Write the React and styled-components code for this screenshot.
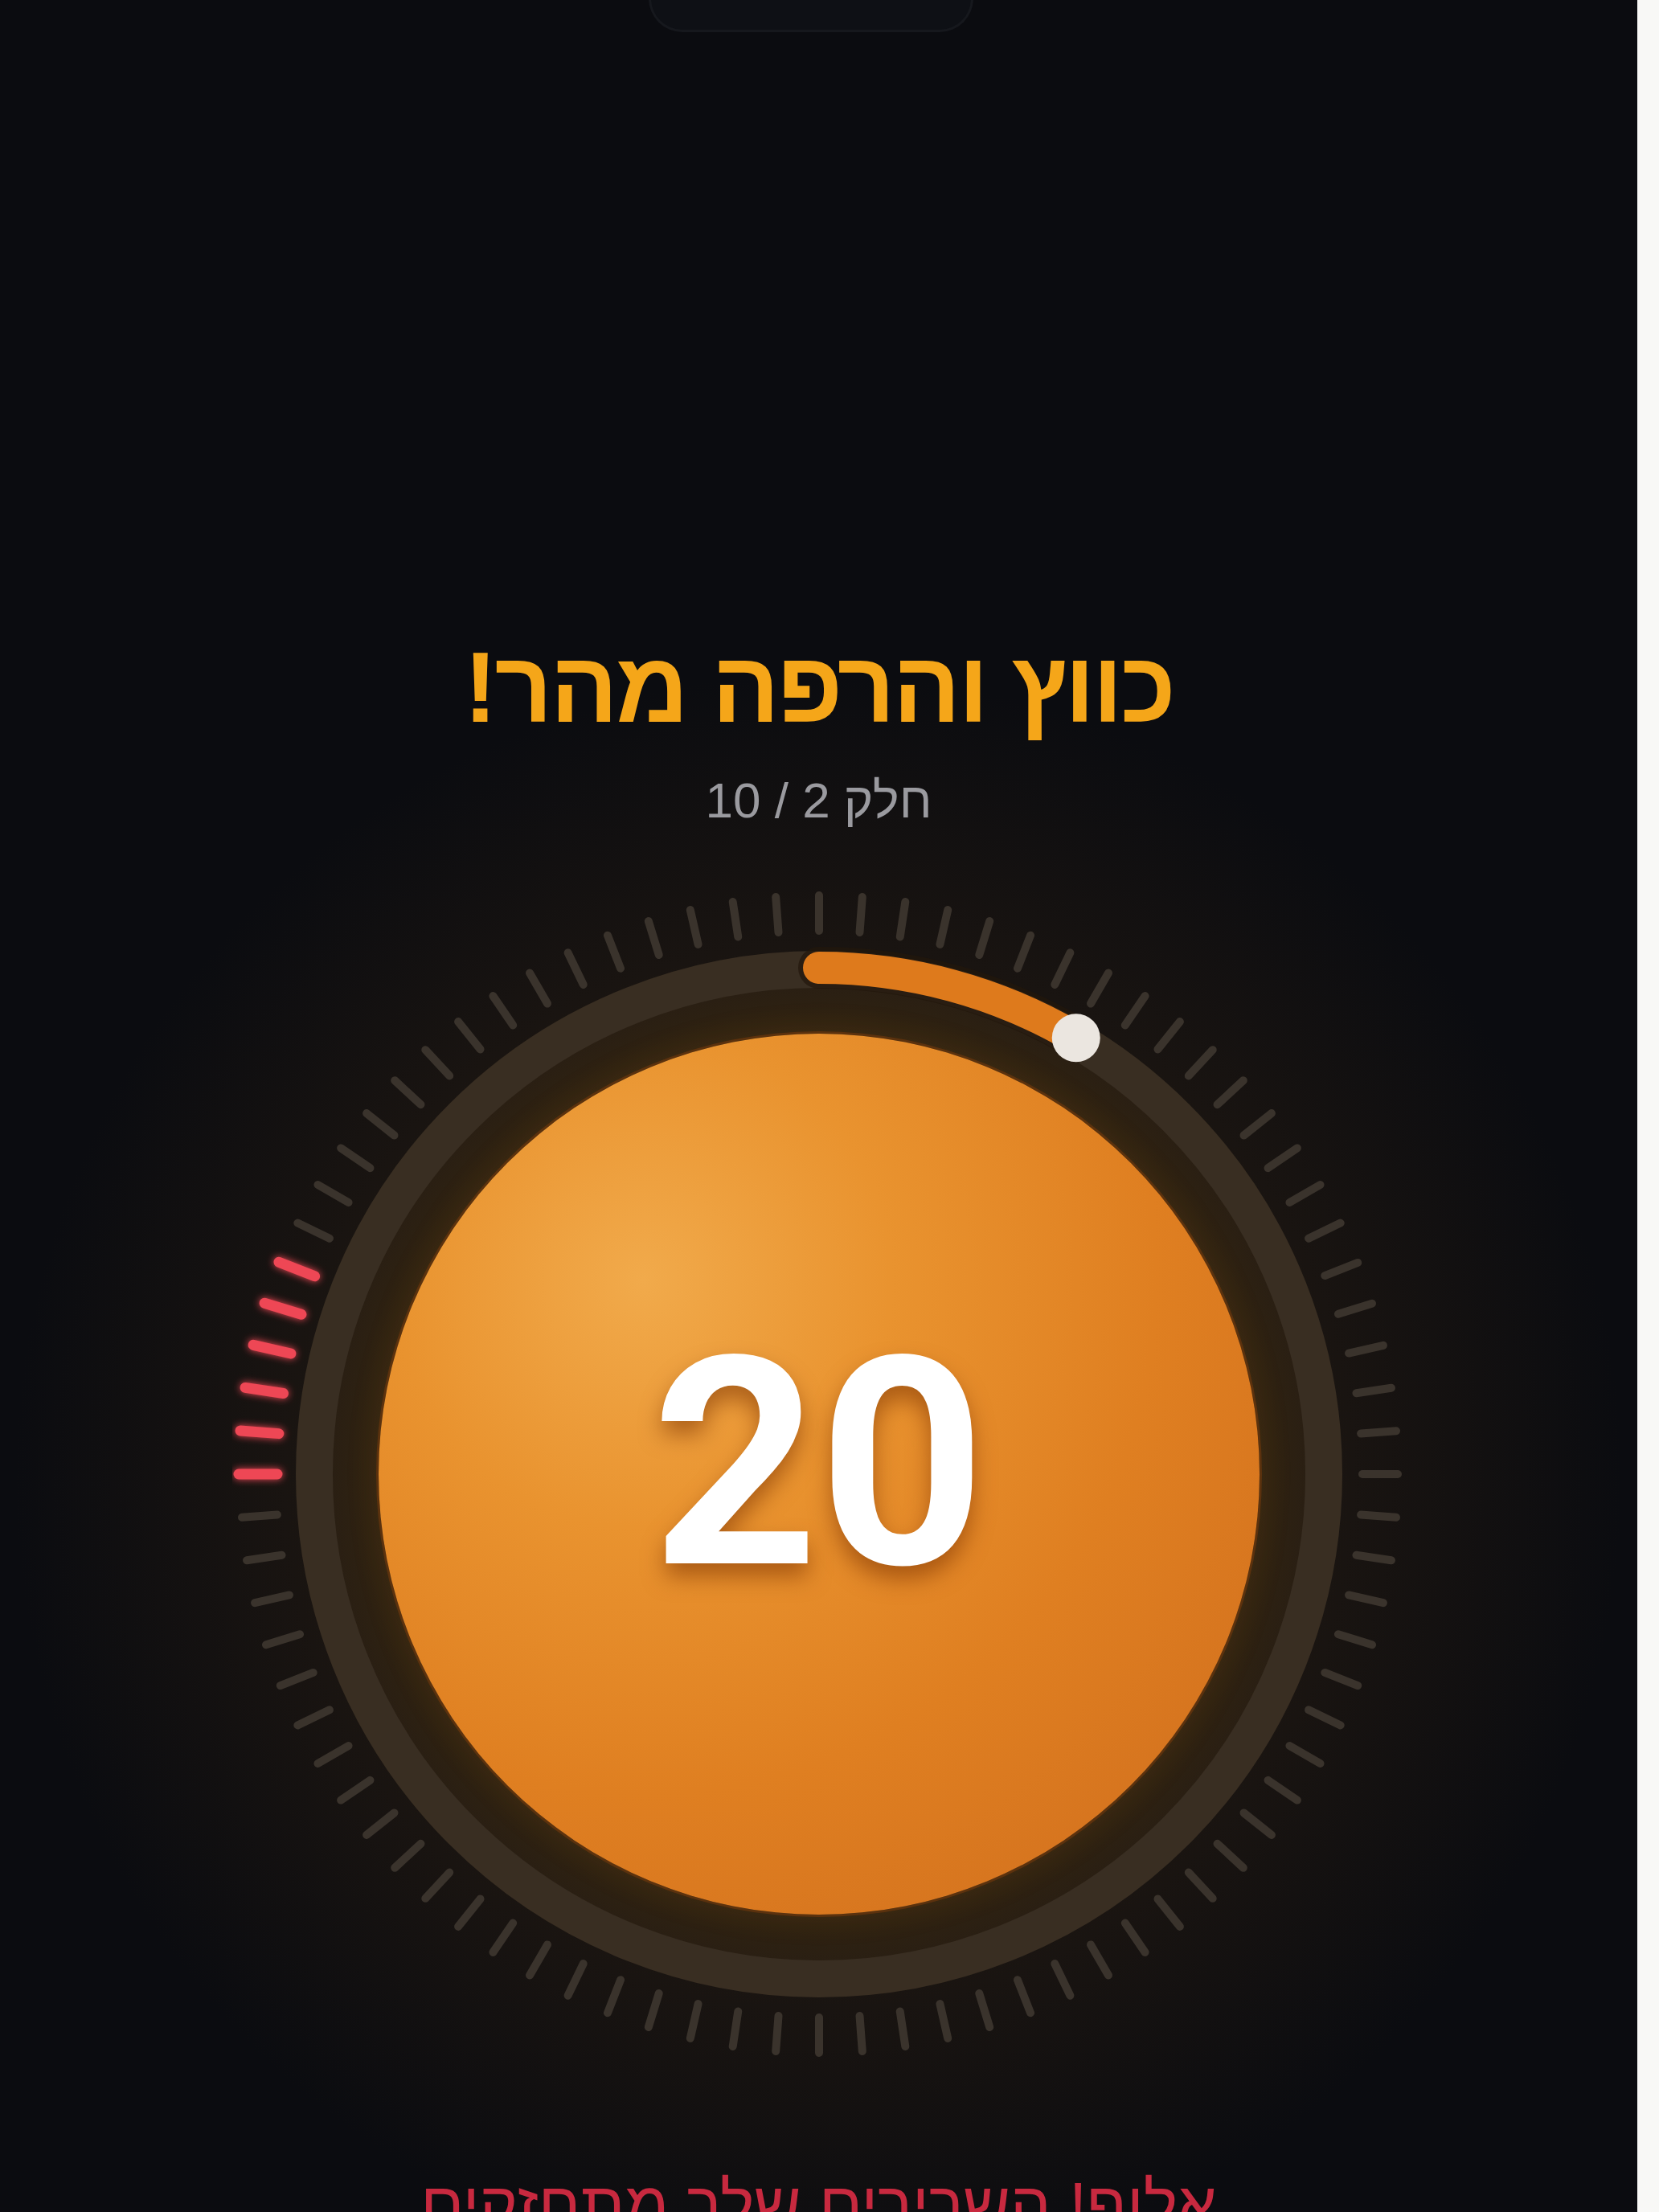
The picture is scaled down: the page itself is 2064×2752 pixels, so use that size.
import React from "react";
import styled, { createGlobalStyle } from "styled-components";

const Global = createGlobalStyle`
  html, body {
    margin: 0;
    padding: 0;
    background: #0b0c10;
  }
  body {
    width: 2064px;
    height: 2752px;
    overflow: hidden;
  }
`;

const Page = styled.div`
  display: flex;
  width: 2064px;
  height: 2752px;
  overflow: hidden;
`;

const Screen = styled.main`
  flex: 1;
  display: flex;
  flex-direction: column;
  align-items: center;
  direction: rtl;
  background: radial-gradient(
      circle 1000px at 50% 1838px,
      rgba(78, 54, 24, 0.55) 0%,
      rgba(46, 32, 18, 0.45) 62%,
      rgba(11, 12, 16, 0) 100%
    ),
    #0b0c10;
`;

const Edge = styled.div`
  width: 27px;
  background: #f8f8f6;
`;

const Notch = styled.div`
  flex-shrink: 0;
  width: 404px;
  height: 42px;
  margin: -2px 20px 0 0;
  box-sizing: border-box;
  background: #0e1015;
  border: 3px solid #16181d;
  border-top: none;
  border-radius: 0 0 64px 64px;
`;

const Title = styled.h1`
  margin: 752px 0 0;
  font-family: "Liberation Sans", "DejaVu Sans", sans-serif;
  font-weight: 700;
  font-size: 125px;
  letter-spacing: -3px;
  line-height: 1;
  color: #f5a619;
  white-space: nowrap;
`;

const Step = styled.div`
  margin-top: 48px;
  font-family: "Liberation Sans", "DejaVu Sans", sans-serif;
  font-size: 62px;
  line-height: 1;
  color: #9a9a9f;
`;

const Dial = styled.div`
  margin-top: 77px;
  display: grid;
  width: 1460px;
  height: 1460px;
  flex-shrink: 0;

  & > * {
    grid-area: 1 / 1;
  }
`;

const Ball = styled.div`
  place-self: center;
  width: 1096px;
  height: 1096px;
  border-radius: 50%;
  display: flex;
  align-items: center;
  justify-content: center;
  background: radial-gradient(
    circle at 30% 28%,
    #f1aa4b 0%,
    #e9932f 28%,
    #df7f21 58%,
    #cf6c1d 100%
  );
  box-shadow: 0 0 0 3px rgba(120, 58, 12, 0.55),
    0 0 40px 4px rgba(225, 125, 30, 0.1);
`;

const Count = styled.span`
  margin-bottom: 26px;
  font-family: Roboto, "Liberation Sans", sans-serif;
  font-weight: 700;
  font-size: 362px;
  line-height: 1;
  color: #ffffff;
  direction: ltr;
  text-shadow: 0 16px 28px rgba(120, 48, 0, 0.55);
`;

const Cheer = styled.div`
  margin-top: 140px;
  font-family: "Liberation Sans", "DejaVu Sans", sans-serif;
  font-weight: 400;
  font-size: 80px;
  line-height: 1;
  color: #c8293f;
  white-space: nowrap;
`;

const C = 730;
const TICKS = 84;
const RED = [63, 64, 65, 66, 67, 68];

const polar = (r, deg) => {
  const a = (deg * Math.PI) / 180;
  return [C + r * Math.sin(a), C - r * Math.cos(a)];
};

const DialArt = ({ progress }) => {
  const end = 360 * progress;
  const [sx, sy] = polar(630, 0);
  const [ex, ey] = polar(630, end);
  const arc = `M ${sx} ${sy} A 630 630 0 0 1 ${ex} ${ey}`;

  return (
    <svg width="1460" height="1460" viewBox="0 0 1460 1460">
      <defs>
        <filter
          id="redGlow"
          filterUnits="userSpaceOnUse"
          x="0"
          y="0"
          width="1460"
          height="1460"
        >
          <feGaussianBlur stdDeviation="5" result="b" />
          <feMerge>
            <feMergeNode in="b" />
            <feMergeNode in="SourceGraphic" />
          </feMerge>
        </filter>
        <radialGradient id="inner" cx="50%" cy="50%" r="50%">
          <stop offset="86%" stopColor="#33250f" />
          <stop offset="100%" stopColor="#2a1f13" />
        </radialGradient>
      </defs>

      <circle cx={C} cy={C} r="606" fill="url(#inner)" />
      <circle
        cx={C}
        cy={C}
        r="628"
        fill="none"
        stroke="#392e22"
        strokeWidth="46"
      />

      {Array.from({ length: TICKS }).map((_, i) => {
        const deg = (360 / TICKS) * i;
        const red = RED.includes(i);
        const [x1, y1] = polar(red ? 674 : 676, deg);
        const [x2, y2] = polar(red ? 722 : 720, deg);
        return (
          <line
            key={i}
            x1={x1}
            y1={y1}
            x2={x2}
            y2={y2}
            stroke={red ? "#ee4654" : "#3a332c"}
            strokeWidth={red ? 13 : 10}
            strokeLinecap="round"
            filter={red ? "url(#redGlow)" : undefined}
          />
        );
      })}

      <path
        d={arc}
        fill="none"
        stroke="#22170b"
        strokeOpacity="0.7"
        strokeWidth="52"
        strokeLinecap="round"
      />
      <path
        d={arc}
        fill="none"
        stroke="#de7a1c"
        strokeWidth="40"
        strokeLinecap="round"
      />
      <circle cx={ex} cy={ey} r="30" fill="#ebe6e0" />
    </svg>
  );
};

const App = () => {
  return (
    <Page>
      <Global />
      <Screen>
        <Notch />
        <Title>כווץ והרפה מהר!</Title>
        <Step>חלק 2 / 10</Step>
        <Dial>
          <DialArt progress={30.5 / 360} />
          <Ball>
            <Count>20</Count>
          </Ball>
        </Dial>
        <Cheer>אלוף! השרירים שלך מתחזקים</Cheer>
      </Screen>
      <Edge />
    </Page>
  );
};

export default App;
